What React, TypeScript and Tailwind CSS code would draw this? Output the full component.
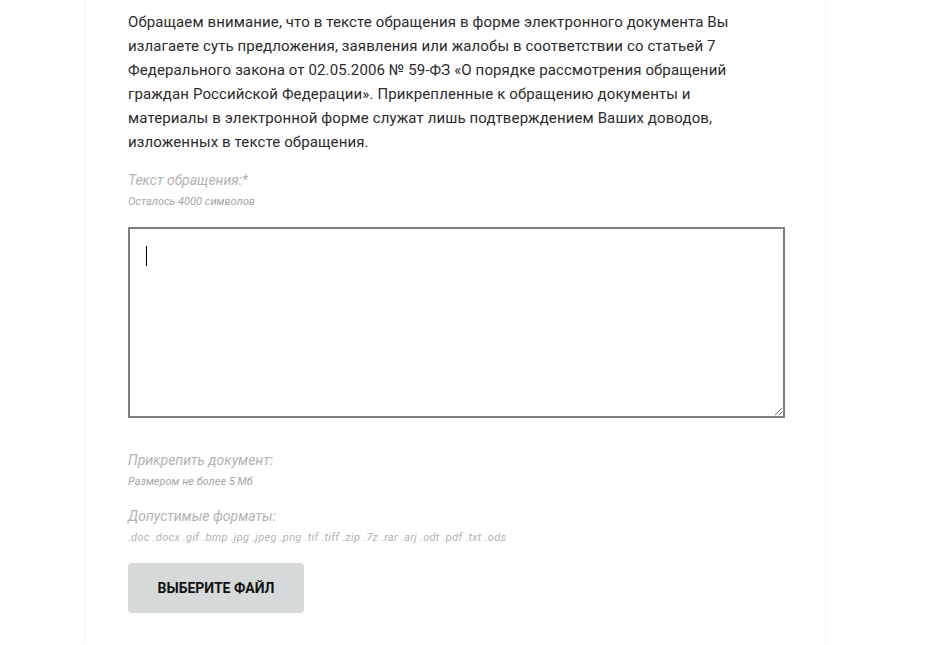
const formats = '.doc .docx .gif .bmp .jpg .jpeg .png .tif .tiff .zip .7z .rar .arj .odt .pdf .txt .ods';

const App = () => {
  return (
    <div className="min-h-[645px] bg-white font-['Roboto',sans-serif]">
      <div className="ml-[86px] w-[739px] min-h-[645px] bg-white shadow-[0_0_3px_rgba(0,0,0,0.08)] pl-[42px] pr-[40px] pt-[10px]">
        <p className="text-[15px] leading-[24px] text-[#2b2b2b] tracking-[0.12px]">
          Обращаем внимание, что в тексте обращения в форме электронного документа Вы
          <br />
          излагаете суть предложения, заявления или жалобы в соответствии со статьей 7
          <br />
          Федерального закона от 02.05.2006 № 59-ФЗ «О порядке рассмотрения обращений
          <br />
          граждан Российской Федерации». Прикрепленные к обращению документы и
          <br />
          материалы в электронной форме служат лишь подтверждением Ваших доводов,
          <br />
          изложенных в тексте обращения.
        </p>

        <div className="mt-[16px] text-[14px] leading-[20px] italic text-[#b3b3b3]">Текст обращения:*</div>
        <div className="mt-[5px] text-[11px] leading-[14px] italic text-[#a6a6a6]">Осталось 4000 символов</div>

        <div className="relative mt-[18px] w-[657px]">
          <textarea className="block w-full h-[191px] border-2 border-[#808080] bg-white p-4 resize-y outline-none" />
          <span className="absolute left-[18px] top-[19px] h-[20px] w-px bg-black" />
        </div>

        <div className="mt-[32px] text-[14px] leading-[20px] italic text-[#b3b3b3]">Прикрепить документ:</div>
        <div className="mt-[5px] text-[11px] leading-[14px] italic text-[#a6a6a6]">Размером не более 5 Мб</div>

        <div className="mt-[17px] text-[14px] leading-[20px] italic text-[#b3b3b3]">Допустимые форматы:</div>
        <div className="mt-[5px] text-[11px] leading-[14px] italic tracking-[0.3px] text-[#b3b3b3]">{formats}</div>

        <button
          type="button"
          className="mt-[18px] flex h-[50px] w-[176px] items-center justify-center rounded-[4px] bg-[#d6d9da] text-[14px] font-bold uppercase text-[#111]"
        >
          Выберите файл
        </button>
      </div>
    </div>
  );
};

export default App;
